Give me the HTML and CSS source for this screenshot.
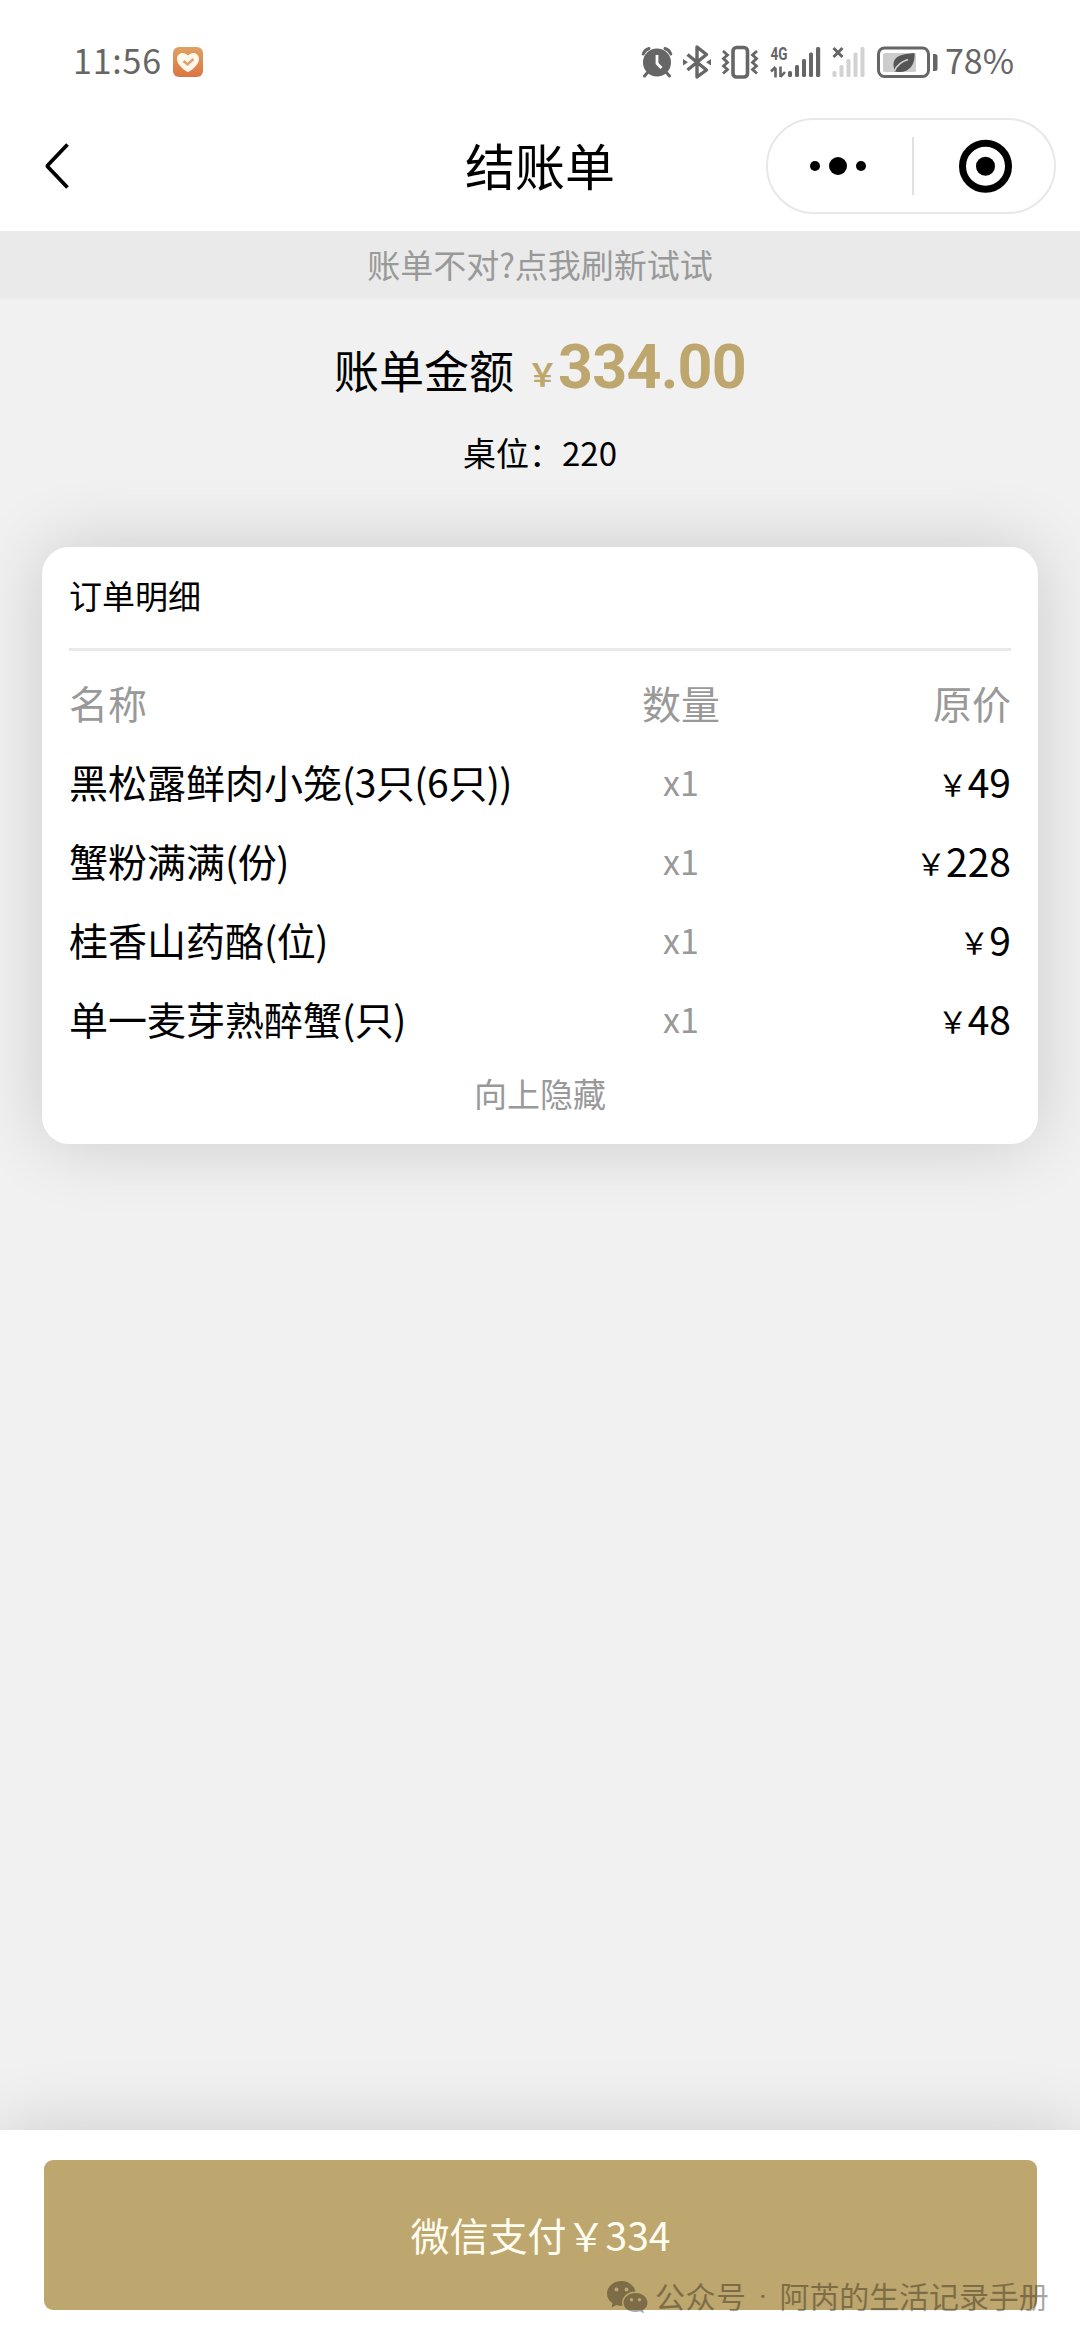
FILE: index.html
```html
<!DOCTYPE html>
<html lang="zh-CN">
<head>
<meta charset="utf-8">
<title>结账单</title>
<link rel="stylesheet" href="styles.css">
</head>
<body>
<div class="screen">
  <header class="top">
    <div class="status">
      <div class="status-left">
        <span class="time">11:56</span>
        <svg class="health" width="30" height="30" viewBox="0 0 30 30">
          <defs><linearGradient id="hg" x1="0" y1="0" x2="0" y2="1"><stop offset="0" stop-color="#dda262"/><stop offset="1" stop-color="#dc7444"/></linearGradient></defs>
          <rect width="30" height="30" rx="6" fill="url(#hg)"/>
          <path d="M15 25C12.500 24.500 4 18 4 12C4 5.500 11 4 15 8.500C19 4 26 5.500 26 12C26 18 17.500 24.500 15 25Z" fill="#fff8ea"/>
          <path d="M10.500 14L14.500 17.500L20.500 12" fill="none" stroke="#d9a272" stroke-width="2.400"/>
        </svg>
      </div>
      <div class="status-right">
        <svg class="alarm" width="32" height="32" viewBox="0 0 32 32">
          <g fill="none" stroke="#666" stroke-width="3" stroke-linecap="round"><path d="M2.200 8A9 9 0 0 1 8 2.500M29.800 8A9 9 0 0 0 24 2.500"/><path d="M7 26L3.500 30M25 26L28.500 30"/></g>
          <circle cx="16" cy="16.500" r="14" fill="#666"/>
          <path d="M16 9V17.500L20.500 22" fill="none" stroke="#fff" stroke-width="2.800"/>
        </svg>
        <svg class="bt" width="30" height="34" viewBox="0 0 30 34">
          <path d="M5.500 9.500L24.500 25L15 32V2L24.500 9.500L5.500 25" fill="none" stroke="#666" stroke-width="3.400" stroke-linejoin="round"/>
          <path d="M1 14L6 17.300L1 20.500ZM29 14L24 17.300L29 20.500Z" fill="#666"/>
        </svg>
        <svg class="vib" width="38" height="34" viewBox="0 0 38 34">
          <rect x="12" y="2.500" width="14.500" height="29.500" rx="3.500" fill="none" stroke="#666" stroke-width="3.600"/>
          <path d="M2 6L6.500 10L2.500 13.500L6.500 17.500L2.500 21L6.500 24.500L2 28.500M36 6L31.500 10L35.500 13.500L31.500 17.500L35.500 21L31.500 24.500L36 28.500" fill="none" stroke="#666" stroke-width="2.800"/>
        </svg>
        <svg class="sim1" width="51" height="40" viewBox="0 -4 51 40">
          <text class="net" x="0.500" y="14" textLength="17" lengthAdjust="spacingAndGlyphs">4G</text>
          <path d="M5.500 31.500V22M1 25.500L5.500 21M10.500 20.500V31M10.500 31L15 26" fill="none" stroke="#666" stroke-width="2.600"/>
          <g fill="#666"><rect x="18" y="25" width="4" height="6" rx="1.500"/><rect x="25" y="19" width="4" height="12" rx="1.500"/><rect x="32" y="13" width="4" height="18" rx="1.500"/><rect x="39" y="6.500" width="4" height="24.500" rx="1.500"/><rect x="46" y="1" width="4.200" height="30" rx="1.500"/></g>
        </svg>
        <svg class="sim2" width="33" height="32" viewBox="0 0 33 32">
          <path d="M1.500 2L10.500 11M10.500 2L1.500 11" stroke="#666" stroke-width="3"/>
          <g fill="#d2d2d2"><rect x=".5" y="25" width="4" height="6" rx="1.500"/><rect x="7.500" y="19" width="4" height="12" rx="1.500"/><rect x="14.500" y="13" width="4" height="18" rx="1.500"/><rect x="21.500" y="6.500" width="4" height="24.500" rx="1.500"/><rect x="28.500" y="1" width="4" height="30" rx="1.500"/></g>
        </svg>
        <svg class="battery" width="61" height="32" viewBox="0 0 61 32">
          <rect x="1.500" y="2" width="50" height="28.500" rx="6" fill="none" stroke="#666" stroke-width="3"/>
          <rect x="6" y="7" width="33" height="19" rx="1.500" fill="#cdcdcd"/>
          <path d="M56 8h2a2.500 2.500 0 0 1 2.500 2.500v12a2.500 2.500 0 0 1-2.500 2.500h-2z" fill="#666"/>
          <path d="M37.500 7C26 8 16.500 9.500 16.500 19C16.500 21 17.500 23 17.500 25.500L19.500 25.800C31 27.500 38.500 20 37.500 7Z" fill="#555"/>
          <path d="M17.500 25C20 19 26 15 31 13.500" fill="none" stroke="#d5d5d5" stroke-width="1.600"/>
        </svg>
        <span class="percent">78%</span>
      </div>
    </div>
    <nav class="nav">
      <svg class="back" width="28" height="50" viewBox="0 0 28 50"><path d="M24.500 3.500L5 24Q4 25 5 26L24.500 46.500" fill="none" stroke="#000" stroke-width="3.800"/></svg>
      <h1 class="title">结账单</h1>
      <div class="capsule">
        <svg class="dots" width="144" height="60" viewBox="0 0 144 60"><circle cx="47" cy="30" r="5"/><circle cx="70" cy="30" r="9"/><circle cx="93" cy="30" r="5"/></svg>
        <i class="split"></i>
        <svg class="target" width="140" height="60" viewBox="0 0 140 60"><circle cx="71.500" cy="30.300" r="23" fill="none" stroke="#000" stroke-width="7"/><circle cx="71.500" cy="30.300" r="9.500"/></svg>
      </div>
    </nav>
  </header>

  <div class="notice">账单不对?点我刷新试试</div>

  <main class="main">
    <section class="summary">
      <div class="amount"><span class="label">账单金额</span><span class="cur">￥</span><strong class="total">334.00</strong></div>
      <div class="table-no">桌位：220</div>
    </section>

    <section class="card">
      <h2 class="card-title">订单明细</h2>
      <div class="grid head"><span>名称</span><span class="qty">数量</span><span class="price">原价</span></div>
      <div class="grid"><span>黑松露鲜肉小笼<span class="unit">(3只(6只))</span></span><span class="qty">x1</span><span class="price"><small>￥</small>49</span></div>
      <div class="grid"><span>蟹粉满满<span class="unit">(份)</span></span><span class="qty">x1</span><span class="price"><small>￥</small>228</span></div>
      <div class="grid"><span>桂香山药酪<span class="unit">(位)</span></span><span class="qty">x1</span><span class="price"><small>￥</small>9</span></div>
      <div class="grid"><span>单一麦芽熟醉蟹<span class="unit">(只)</span></span><span class="qty">x1</span><span class="price"><small>￥</small>48</span></div>
      <div class="collapse">向上隐藏</div>
    </section>
  </main>

  <footer class="pay-bar">
    <button class="pay">微信支付￥334</button>
  </footer>

  <div class="watermark">
    <svg width="41" height="33" viewBox="0 0 41 33">
      <path fill-rule="evenodd" d="M14.500 0C6.500 0 0 5.500 0 12.500C0 16.500 2 20 5.500 22L4.500 26.500L9.500 24Q12 25 15.500 25C13.500 17 19.500 10.500 28.500 10.500C27 4.500 21.500 0 14.500 0ZM9.500 6.500a2 2 0 1 1 0 4a2 2 0 1 1 0-4ZM19.500 6.500a2 2 0 1 1 0 4a2 2 0 1 1 0-4Z"/>
      <path fill-rule="evenodd" d="M28.500 12C21.500 12 16.500 16.500 16.500 21.500C16.500 27 21.500 31 28.500 31Q31 31 33 30.300L37 32.500L36 29C39 27 40.500 24.500 40.500 21.500C40.500 16.500 35.500 12 28.500 12ZM24.500 17a1.700 1.700 0 1 1 0 3.400a1.700 1.700 0 1 1 0-3.400ZM32.500 17a1.700 1.700 0 1 1 0 3.400a1.700 1.700 0 1 1 0-3.400Z"/>
    </svg>
    <span class="wm-kind">公众号</span><span class="wm-dot">·</span><span class="wm-name">阿芮的生活记录手册</span>
  </div>
</div>
</body>
</html>
```
FILE: styles.css
```css
* { box-sizing: border-box; margin: 0; padding: 0; }

body {
  width: 1080px;
  height: 2340px;
  overflow: hidden;
  background: #f1f1f1;
  color: #000;
  font-family: "Noto Sans CJK SC", sans-serif;
}

svg { display: block; flex: none; overflow: visible; }

.screen {
  position: relative;
  display: flex;
  flex-direction: column;
  height: 2340px;
  overflow: hidden;
}

.top { height: 231px; background: #fff; }

.status {
  display: flex;
  justify-content: space-between;
  align-items: center;
  height: 101px;
  padding: 22px 66px 0 73px;
  color: #666;
  font-size: 34px;
  line-height: 40px;
}
.status-left, .status-right { display: flex; align-items: center; }
.time { width: 100px; letter-spacing: .8px; white-space: nowrap; margin-top: -4px; }
.percent { width: 69px; margin-left: 7px; white-space: nowrap; margin-top: -4px; }
.alarm { margin-right: 9px; }
.bt { margin-right: 9px; }
.vib { margin-right: 11px; }
.sim1 { margin-right: 11px; }
.sim2 { margin-right: 12px; }
.net { font: bold 18px Roboto, sans-serif; fill: #666; }

.nav {
  display: grid;
  grid-template-columns: 1fr auto 1fr;
  align-items: center;
  height: 130px;
  padding: 0 24px 0 43px;
}
.title { font-size: 50px; font-weight: 400; line-height: 60px; margin: -5px 19px 0 0; }
.capsule {
  justify-self: end;
  display: flex;
  align-items: center;
  width: 290px;
  height: 96px;
  border: 2px solid #e8e8e8;
  border-radius: 48px;
}
.split { width: 2px; height: 58px; background: #e0e0e0; }

.notice {
  height: 68px;
  background: #eaeaea;
  color: #999;
  font-size: 33px;
  line-height: 66px;
  text-align: center;
}

.main { flex: 1; }

.summary { height: 248px; padding-top: 39px; text-align: center; }
.amount {
  display: flex;
  justify-content: center;
  align-items: baseline;
  height: 76px;
  line-height: 60px;
}
.label { font-size: 45px; }
.cur { margin-left: 13px; color: #bea76e; font-size: 31px; font-weight: 700; position: relative; top: -3px; }
.total { color: #bea76e; font-family: Roboto, sans-serif; font-size: 61px; letter-spacing: -.8px; position: relative; top: -1px; }
.table-no { margin-top: 14px; font-size: 33px; line-height: 48px; }

.card {
  width: 996px;
  height: 597px;
  margin: 0 42px;
  padding: 0 27px;
  border-radius: 27px;
  background: #fff;
  box-shadow: 0 0 72px rgba(0, 0, 0, .16);
}
.card-title {
  height: 104px;
  margin-bottom: 12px;
  border-bottom: 3px solid #e9e9e9;
  font-size: 33px;
  font-weight: 400;
  line-height: 97px;
}
.grid {
  display: grid;
  grid-template-columns: 552px 120px 1fr;
  height: 79px;
  font-size: 39px;
  line-height: 79px;
  white-space: nowrap;
}
.unit { letter-spacing: -.5px; }
.head { color: #999; }
.qty { color: #999; text-align: center; font-size: 34px; }
.head .qty { font-size: 39px; }
.price { text-align: right; }
.price small { font-size: 30px; position: relative; top: -2px; }
.collapse { color: #999; font-size: 33px; line-height: 70px; text-align: center; }

.pay-bar {
  height: 210px;
  padding: 30px 43px 30px 44px;
  background: #fff;
  box-shadow: 0 0 72px rgba(0, 0, 0, .16);
}
.pay {
  display: block;
  width: 993px;
  height: 150px;
  padding-bottom: 2px;
  border: 0;
  border-radius: 9px;
  background: #bea76e;
  color: #fffdf0;
  font: 39px "Noto Sans CJK SC", sans-serif;
}

.watermark {
  position: absolute;
  left: 607px;
  top: 2275px;
  display: flex;
  align-items: center;
  height: 40px;
  color: #000;
  font-size: 30px;
  line-height: 40px;
  opacity: .34;
  white-space: nowrap;
}
.watermark svg { margin-top: 5px; }
.wm-kind { margin-left: 7px; letter-spacing: .5px; }
.wm-dot { width: 33px; text-align: center; font-family: Roboto, sans-serif; margin-top: 4px; }
.wm-name { letter-spacing: -.1px; }
```
